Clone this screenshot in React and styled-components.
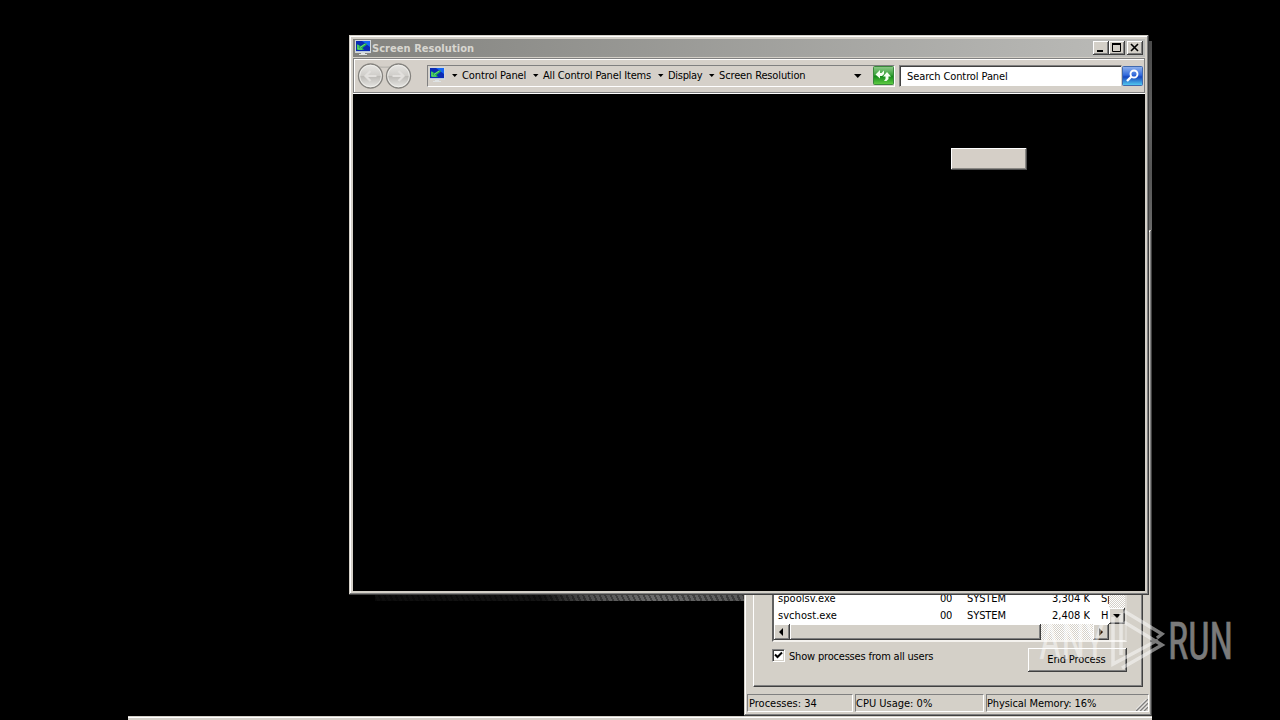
import React from 'react';
import styled, { createGlobalStyle } from 'styled-components';

const GlobalStyle = createGlobalStyle`
  * {
    box-sizing: border-box;
  }
  body {
    margin: 0;
    background: #000;
    overflow: hidden;
  }
`;

const Desktop = styled.div`
  position: relative;
  width: 1280px;
  height: 720px;
  overflow: hidden;
  background: #000;
  color: #000;
  font-family: "DejaVu Sans Condensed", "DejaVu Sans", sans-serif;
  font-stretch: condensed;
  font-size: 11px;
  line-height: 14px;
  cursor: default;
`;

const Wallpaper = styled.div`
  position: absolute;
  left: ${(p) => p.$x}px;
  top: ${(p) => p.$y}px;
  width: ${(p) => p.$w}px;
  height: ${(p) => p.$h}px;
  background: ${(p) => p.$fill};
`;

const Window = styled.div`
  position: absolute;
  left: ${(p) => p.$x}px;
  top: ${(p) => p.$y}px;
  width: ${(p) => p.$w}px;
  height: ${(p) => p.$h}px;
  display: flex;
  flex-direction: column;
  background: #d4d0c8;
  box-shadow: inset -1px -1px #404040, inset 1px 1px #d4d0c8,
    inset -2px -2px #808080, inset 2px 2px #fff;
  padding: 4px;
`;

const TitleBar = styled.div`
  flex: none;
  display: flex;
  align-items: center;
  height: 18px;
  padding: 0 2px 0 2px;
  background: linear-gradient(90deg, #83837f, #bcbcb9);
`;

const Title = styled.div`
  flex: 1;
  margin-left: 1px;
  padding-top: 1px;
  color: #d8d6d0;
  font-weight: bold;
  white-space: nowrap;
  letter-spacing: ${(p) => p.$spacing || 0}px;
`;

const TitleButton = styled.div`
  width: 16px;
  height: 14px;
  margin-left: ${(p) => (p.$gap ? 2 : 0)}px;
  background: #d4d0c8;
  box-shadow: inset -1px -1px #404040, inset 1px 1px #fff, inset -2px -2px #808080;
  svg {
    display: block;
  }
`;

const NavBar = styled.div`
  flex: none;
  display: flex;
  align-items: flex-start;
  height: 35px;
  margin-top: 1px;
  padding: 6px 2px 0 3px;
  background: #d5d0c9;
  border: 1px solid #808080;
  box-shadow: inset 1px 1px #fff, 0 1px #fff;
`;

const NavButtons = styled.div`
  flex: none;
  width: 70px;
  height: 28px;
  margin-top: -3px;
  svg {
    display: block;
  }
`;

const AddressBar = styled.div`
  flex: none;
  display: flex;
  align-items: center;
  width: 468px;
  height: 22px;
  border: 1px solid;
  border-color: #808080 #fff #fff #808080;
`;

const AddressIcon = styled.div`
  flex: none;
  width: 20px;
  height: 20px;
  padding: 1px 0 0 1px;
`;

const Crumb = styled.div`
  flex: none;
  width: ${(p) => p.$w}px;
  white-space: nowrap;
  letter-spacing: ${(p) => p.$spacing || 0}px;
`;

const CrumbArrow = styled.div`
  flex: none;
  width: ${(p) => p.$w}px;
  height: 4px;
  margin-left: ${(p) => p.$gap || 0}px;
  svg {
    display: block;
  }
`;

const Refresh = styled.div`
  flex: none;
  width: 21px;
  height: 20px;
  margin-left: auto;
  svg {
    display: block;
  }
`;

const SearchBox = styled.div`
  flex: none;
  width: 223px;
  height: 22px;
  margin-left: 4px;
  padding: 4px 0 0 7px;
  background: #fff;
  border: 1px solid;
  border-color: #808080 #d4d0c8 #d4d0c8 #808080;
  box-shadow: inset 1px 1px #404040;
  letter-spacing: -0.1px;
`;

const SearchButton = styled.div`
  flex: none;
  width: 20px;
  height: 20px;
  margin-top: 1px;
  svg {
    display: block;
  }
`;

const Client = styled.div`
  flex: 1;
  margin-top: 1px;
  padding: 54px 0 0 598px;
  background: #000;
`;

const BlankButton = styled.div`
  width: 76px;
  height: 22px;
  background: #d5cfc7;
  box-shadow: inset -1px -1px #505050, inset 1px 1px #fff, inset -2px -2px #8a8884;
`;

const TabPane = styled.div`
  flex: none;
  width: 390px;
  height: 431px;
  margin: 4px 0 0 5px;
  padding: 331px 0 0 18px;
  border: 1px solid;
  border-color: #fff #404040 #404040 #fff;
  box-shadow: inset -1px -1px #808080;
`;

const ProcessList = styled.div`
  display: grid;
  grid-template-columns: 335px 16px;
  grid-template-rows: 34px 16px;
  width: 355px;
  height: 54px;
  border: 2px solid;
  border-color: #404040 #dedbd5 #f4f2ee #606060;
`;

const Rows = styled.div`
  background: #fff;
  overflow: hidden;
`;

const Row = styled.div`
  display: grid;
  grid-template-columns: 140px 38px 15px 78px 45px 11px 8px;
  height: 17px;
  line-height: 18px;
  white-space: nowrap;
`;

const Cell = styled.div`
  text-align: ${(p) => (p.$right ? 'right' : 'left')};
  padding-left: ${(p) => p.$pad || 0}px;
  letter-spacing: ${(p) => p.$spacing || 0}px;
  overflow: hidden;
`;

const Track = styled.div`
  display: flex;
  flex-direction: ${(p) => (p.$vertical ? 'column' : 'row')};
  justify-content: space-between;
  background: repeating-conic-gradient(#fff 0 25%, #d4d0c8 0 50%) 0 0 / 2px 2px;
`;

const ScrollButton = styled.div`
  width: 16px;
  height: 16px;
  background: #d4d0c8;
  box-shadow: inset -1px -1px #404040, inset 1px 1px #fff, inset -2px -2px #808080;
  svg {
    display: block;
  }
`;

const Thumb = styled.div`
  width: 251px;
  height: 16px;
  margin-right: auto;
  background: #d4d0c8;
  box-shadow: inset -1px -1px #404040, inset 1px 1px #fff, inset -2px -2px #808080;
`;

const Corner = styled.div`
  background: #d4d0c8;
`;

const PaneFooter = styled.div`
  display: flex;
  align-items: flex-start;
  margin-top: 6px;
`;

const CheckBox = styled.div`
  width: 13px;
  height: 13px;
  margin-top: 1px;
  background: #fff;
  border: 1px solid;
  border-color: #808080 #fff #fff #808080;
  box-shadow: inset 1px 1px #404040, inset -1px -1px #d4d0c8;
  svg {
    display: block;
  }
`;

const CheckLabel = styled.div`
  width: 243px;
  margin-top: 2px;
  padding-left: 4px;
  letter-spacing: -0.19px;
`;

const PushButton = styled.div`
  width: 99px;
  height: 24px;
  padding: 5px 2px 0 0;
  text-align: center;
  background: #d4d0c8;
  box-shadow: inset -1px -1px #404040, inset 1px 1px #fff, inset -2px -2px #808080;
  letter-spacing: -0.1px;
`;

const StatusBar = styled.div`
  display: flex;
  gap: 2px;
  margin: 7px 0 0 -1px;
  height: 18px;
`;

const StatusCell = styled.div`
  flex: none;
  position: relative;
  width: ${(p) => p.$w}px;
  padding: 2px 0 0 ${(p) => p.$pad || 0}px;
  border: 1px solid;
  border-color: #808080 #fff #fff #808080;
  white-space: nowrap;
  letter-spacing: ${(p) => p.$spacing || 0}px;
`;

const Grip = styled.svg`
  position: absolute;
  right: 0;
  bottom: 0;
`;

const Taskbar = styled.div`
  position: absolute;
  left: 128px;
  top: 716px;
  width: 1024px;
  height: 4px;
  background: #d4d0c8;
  box-shadow: inset 0 1px #d4d0c8, inset 0 2px #fff;
`;

const Watermark = styled.svg`
  position: absolute;
  left: 1030px;
  top: 600px;
  opacity: 0.48;
`;

function MonitorIcon() {
  return (
    <svg width="16" height="16" viewBox="0 0 16 16">
      <rect x="0.5" y="0.5" width="15" height="12" fill="#b9c9dc" stroke="#d3d8da" />
      <rect x="1" y="1" width="14" height="10" fill="#0a2bb4" />
      <path d="M7 1h8v6z" fill="#1767f5" />
      <path d="M2 4v6h7L7.500 8 12 4.500 11 3 5.500 6z" fill="#22b052" />
      <path d="M3 5v4h4M5 7.500l5-3.500" stroke="#7be07a" strokeWidth="0.900" fill="none" />
      <path d="M6 13h4v1h2v1H4v-1h2z" fill="#dfe3e4" />
    </svg>
  );
}

function DownArrow({ big }) {
  return big ? (
    <svg width="8" height="4"><path d="M0 0h7.500L3.750 4z" /></svg>
  ) : (
    <svg width="6" height="3"><path d="M0 0h5.500L2.750 3z" /></svg>
  );
}

function NavIcons() {
  return (
    <svg width="56" height="28" viewBox="0 0 56 28">
      <defs>
        <linearGradient id="disc" x1="0" y1="0" x2="0" y2="1">
          <stop offset="0" stopColor="#e8e7e4" />
          <stop offset="0.48" stopColor="#cfcdc9" />
          <stop offset="0.52" stopColor="#bdbbb7" />
          <stop offset="1" stopColor="#e9e8e5" />
        </linearGradient>
      </defs>
      <path d="M13 3q14 3 29 0v3H13z" fill="#bdbab4" />
      {[13.5, 41.5].map((cx) => (
        <g key={cx}>
          <circle cx={cx} cy="14" r="12" fill="url(#disc)" stroke="#85837f" strokeWidth="1.3" />
          <circle cx={cx} cy="14" r="10.8" fill="none" stroke="#f3f2ef" strokeWidth="0.8" />
        </g>
      ))}
      <path d="M19.500 14h-11m5-5l-5 5 5 5M35.500 14h11m-5-5l5 5-5 5" stroke="#e2e0dd" strokeWidth="2.2" fill="none" />
    </svg>
  );
}

function RefreshIcon() {
  return (
    <svg width="21" height="20" viewBox="0 0 21 20">
      <defs>
        <linearGradient id="green" x1="0" y1="0" x2="0" y2="1">
          <stop offset="0" stopColor="#8fca8b" />
          <stop offset="0.45" stopColor="#3ba33b" />
          <stop offset="0.55" stopColor="#168c1b" />
          <stop offset="1" stopColor="#62cf45" />
        </linearGradient>
      </defs>
      <rect x="0.5" y="0.5" width="20" height="18" rx="1" fill="url(#green)" stroke="#39883c" />
      <path d="M2.500 8.500L7 4v3h1.500l2.500-2.500v3.500l-2 2H7v2.500z" fill="#f4fff0" />
      <path d="M18 10.500L14 6l-4 4.500h2.500V13l-1.500 2h2.500l2-2v-2.500z" fill="#f4fff0" />
    </svg>
  );
}

function SearchIcon() {
  return (
    <svg width="21" height="20" viewBox="0 0 21 20">
      <defs>
        <linearGradient id="blue" x1="0" y1="0" x2="0" y2="1">
          <stop offset="0" stopColor="#92b3ed" />
          <stop offset="0.45" stopColor="#326bdc" />
          <stop offset="0.55" stopColor="#1746be" />
          <stop offset="1" stopColor="#55cff2" />
        </linearGradient>
      </defs>
      <rect x="0.5" y="0.5" width="20" height="19" rx="1" fill="url(#blue)" stroke="#4069ae" />
      <circle cx="12" cy="8" r="3.500" fill="none" stroke="#fff" strokeWidth="1.900" />
      <path d="M9.500 10.500L5 15" stroke="#fff" strokeWidth="2.400" />
    </svg>
  );
}

const crumbs = [
  { text: 'Control Panel', w: 71, spacing: -0.1 },
  { text: 'All Control Panel Items', w: 115, spacing: -0.16 },
  { text: 'Display', w: 41, spacing: -0.3 },
  { text: 'Screen Resolution', w: 135, spacing: -0.14 },
];

const processes = [
  { name: 'spoolsv.exe', session: '00', user: 'SYSTEM', memory: '3,304 K', info: 'Sp' },
  { name: 'svchost.exe', session: '00', user: 'SYSTEM', memory: '2,408 K', info: 'H' },
];

function TaskManager() {
  return (
    <Window $x={744} $y={230} $w={408} $h={486}>
      <TitleBar />
      <TabPane>
        <ProcessList>
          <Rows>
            {processes.map((p) => (
              <Row key={p.name}>
                <Cell $pad={4} $spacing={0.05}>{p.name}</Cell>
                <Cell $right $spacing={-0.3}>{p.session}</Cell>
                <Cell />
                <Cell $spacing={-0.1}>{p.user}</Cell>
                <Cell $right>{p.memory}</Cell>
                <Cell />
                <Cell>{p.info}</Cell>
              </Row>
            ))}
          </Rows>
          <Track $vertical>
            <div />
            <ScrollButton><svg width="16" height="16"><path d="M4 6h8l-4 4z" /></svg></ScrollButton>
          </Track>
          <Track>
            <ScrollButton><svg width="16" height="16"><path d="M9 4v8l-4-4z" /></svg></ScrollButton>
            <Thumb />
            <ScrollButton><svg width="16" height="16"><path d="M6 4v8l4-4z" /></svg></ScrollButton>
          </Track>
          <Corner />
        </ProcessList>
        <PaneFooter>
          <CheckBox>
            <svg width="11" height="11"><path d="M2 4.500l2.500 2.500 4.500-4.500" stroke="#000" strokeWidth="2" fill="none" /></svg>
          </CheckBox>
          <CheckLabel>Show processes from all users</CheckLabel>
          <PushButton>End Process</PushButton>
        </PaneFooter>
      </TabPane>
      <StatusBar>
        <StatusCell $w={106} $pad={1}>Processes: 34</StatusCell>
        <StatusCell $w={129}>CPU Usage: 0%</StatusCell>
        <StatusCell $w={163} $spacing={-0.1}>
          Physical Memory: 16%
          <Grip width="12" height="12">
            <path d="M0 12L12 0M4 12l8-8M8 12l4-4" stroke="#808080" strokeWidth="1.500" />
            <path d="M-1.500 12L12-1.500M2.500 12L12 2.500M6.500 12L12 6.500" stroke="#fff" strokeWidth="0.800" />
          </Grip>
        </StatusCell>
      </StatusBar>
    </Window>
  );
}

function ControlPanel() {
  return (
    <Window $x={349} $y={35} $w={800} $h={560}>
      <TitleBar>
        <MonitorIcon />
        <Title $spacing={0.05}>Screen Resolution</Title>
        <TitleButton><svg width="16" height="14"><path d="M4 9h6v2H4z" /></svg></TitleButton>
        <TitleButton>
          <svg width="16" height="14"><path d="M3.500 3.500h8v7h-8z" fill="none" stroke="#000" /><path d="M3 2h9v2H3z" /></svg>
        </TitleButton>
        <TitleButton $gap>
          <svg width="16" height="14"><path d="M4 3l7 7M11 3l-7 7" stroke="#000" strokeWidth="1.600" /></svg>
        </TitleButton>
      </TitleBar>
      <NavBar>
        <NavButtons><NavIcons /></NavButtons>
        <AddressBar>
          <AddressIcon><MonitorIcon /></AddressIcon>
          <CrumbArrow $w={10} $gap={4}><DownArrow /></CrumbArrow>
          {crumbs.map((c, i) => (
            <React.Fragment key={c.text}>
              <Crumb $w={c.w} $spacing={c.spacing}>{c.text}</Crumb>
              <CrumbArrow $w={10}><DownArrow big={i === crumbs.length - 1} /></CrumbArrow>
            </React.Fragment>
          ))}
          <Refresh><RefreshIcon /></Refresh>
        </AddressBar>
        <SearchBox>Search Control Panel</SearchBox>
        <SearchButton><SearchIcon /></SearchButton>
      </NavBar>
      <Client>
        <BlankButton />
      </Client>
    </Window>
  );
}

export default function App() {
  return (
    <>
      <GlobalStyle />
      <Desktop>
        <Wallpaper $x={1149} $y={41} $w={3} $h={190} $fill="linear-gradient(#4a4a4a, #626262 40%, #555 70%, #6a6a6a)" />
        <Wallpaper
          $x={375}
          $y={595}
          $w={369}
          $h={6}
          $fill="repeating-linear-gradient(65deg, rgba(0, 0, 0, 0.35) 0 2px, transparent 2px 5px), linear-gradient(90deg, #0d0d0d, #141414 45%, #505050 58%, #6a6a6a 75%, #585858)"
        />
        <TaskManager />
        <ControlPanel />
        <Taskbar />
        <Watermark width="210" height="80">
          <g fill="#fff" fontFamily="Roboto, sans-serif" fontSize="52">
            <text x="9" y="59" textLength="66" lengthAdjust="spacingAndGlyphs">ANY</text>
            <text x="138" y="59" textLength="65" lengthAdjust="spacingAndGlyphs" stroke="#fff" strokeWidth="0.6">RUN</text>
          </g>
          <g fill="none" stroke="#fff" strokeWidth="3.500">
            <path d="M83 17v47l45-24M91 55V13" />
            <path d="M94 11l38 23-5 4M94 22l38 23-40 23" />
          </g>
        </Watermark>
      </Desktop>
    </>
  );
}
